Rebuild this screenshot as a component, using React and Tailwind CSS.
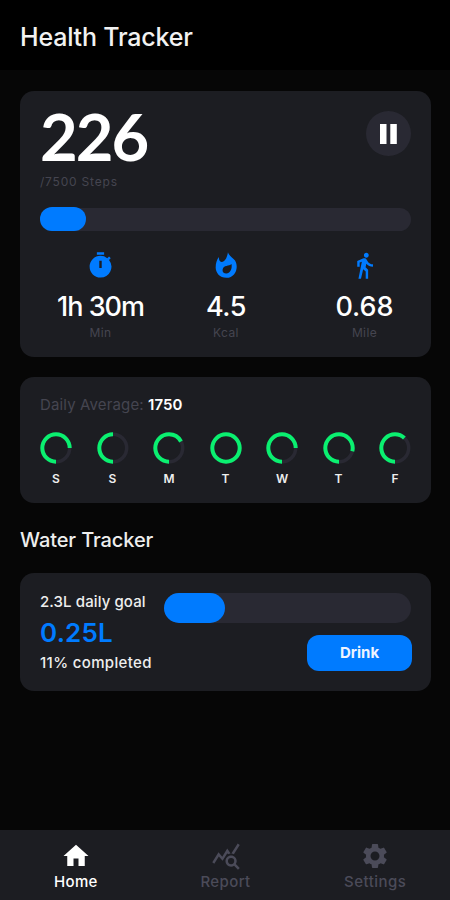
import {
  MdDirectionsWalk,
  MdHome,
  MdQueryStats,
  MdSettings,
  MdTimer,
} from "react-icons/md";

const stats = [
  { icon: MdTimer, value: "1h 30m", label: "Min", cell: "w-[121px]", tracking: "tracking-[-1px]" },
  { icon: FlameIcon, value: "4.5", label: "Kcal", cell: "w-[130px]", tracking: "tracking-[-0.5px]" },
  { icon: MdDirectionsWalk, value: "0.68", label: "Mile", cell: "w-[120px] pl-[27px]", tracking: "tracking-[0px]" },
];

const days = [
  { day: "S", percent: 75 },
  { day: "S", percent: 50 },
  { day: "M", percent: 67 },
  { day: "T", percent: 100 },
  { day: "W", percent: 75 },
  { day: "T", percent: 79 },
  { day: "F", percent: 62 },
];

const tabs = [
  { icon: MdHome, label: "Home", style: "text-white tracking-[0.3px]" },
  { icon: MdQueryStats, label: "Report", style: "text-[#4b4b59] tracking-[0.4px]" },
  { icon: MdSettings, label: "Settings", style: "text-[#4b4b59] tracking-[0.5px]" },
];

function FlameIcon({ size, color }) {
  return (
    <svg width={size} height={size} viewBox="-1 -0.5 30 30" fill={color}>
      <path
        fillRule="evenodd"
        d="M15.5 .8C17 5 20 6 22.8 9.3C27.2 16.5 23 27.2 14 27.2C7 27.2 2.8 22 2.8 16.5C2.8 12.5 4 8.8 6 5.8C6.2 8.8 6.8 10.8 9 10.8C12.5 10.8 14.7 6 15.5 .8ZM19.2 13C16.8 15.4 10.8 14 10 18.6C9.5 21.3 11.6 23 14 22.8C18 22.4 20 18 19.2 13Z"
      />
    </svg>
  );
}

function DayRing({ percent }) {
  return (
    <svg width="32" height="32" viewBox="0 0 32 32" fill="none">
      <circle cx="16" cy="16" r="13.7" stroke="#292933" strokeWidth="3.5" />
      <circle
        cx="16"
        cy="16"
        r="13.7"
        stroke="#0af070"
        strokeWidth="4"
        pathLength="100"
        strokeDasharray={`${percent} 100`}
        transform="rotate(90 16 16)"
      />
    </svg>
  );
}

function StepsCard() {
  return (
    <section className="h-[266px] rounded-[14px] bg-[#1c1d22] px-5 pt-5">
      <div className="flex h-[95px] justify-between">
        <div>
          <p className="-mt-1 font-['Lato',sans-serif] text-[65px] leading-[58px] font-bold tracking-[-2px] text-white">
            226
          </p>
          <p className="mt-[8px] text-[12px] leading-[18px] tracking-[0.8px] text-[#454550]">
            /7500 Steps
          </p>
        </div>
        <button className="flex size-[45px] items-center justify-center rounded-full bg-[#292933]">
          <svg width="17" height="20" viewBox="0 0 17 20" fill="#fff">
            <path d="M0 0h6.5v20H0zM10.3 0h6.5v20h-6.5z" />
          </svg>
        </button>
      </div>

      <div className="mt-[2px] h-[23px] rounded-full bg-[#292933]">
        <div className="relative -top-px h-6 w-[46px] rounded-full bg-[#007bff]" />
      </div>

      <div className="mt-5 flex">
        {stats.map(({ icon: Icon, value, label, cell, tracking }) => (
          <div key={label} className={`flex flex-col items-center ${cell}`}>
            <Icon size={29} color="#007bff" />
            <p className={`mt-[13px] text-[27px] leading-7 font-medium whitespace-nowrap text-white ${tracking}`}>
              {value}
            </p>
            <p className="mt-[4px] text-[12px] leading-4 tracking-[0.4px] text-[#454550]">
              {label}
            </p>
          </div>
        ))}
      </div>
    </section>
  );
}

function DailyAverage() {
  return (
    <section className="mt-5 h-[126px] rounded-[14px] bg-[#1c1d22] px-5 pt-[18px]">
      <p className="text-[15px] leading-5 tracking-[0.14px] text-[#454550]">
        Daily Average:{" "}
        <span className="font-semibold tracking-[0px] text-white">1750</span>
      </p>
      <div className="mt-[17px] flex justify-between">
        {days.map(({ day, percent }, i) => (
          <div key={i} className="flex flex-col items-center">
            <DayRing percent={percent} />
            <span className="mt-[7px] text-[12px] leading-4 font-semibold text-[#eeeeee]">
              {day}
            </span>
          </div>
        ))}
      </div>
    </section>
  );
}

function WaterCard() {
  return (
    <section className="mt-5 flex h-[118px] justify-between rounded-[14px] bg-[#1c1d22] pr-[19px] pl-5">
      <div className="pt-[19px] font-medium whitespace-nowrap text-[#eeeeee]">
        <p className="text-[15px] leading-5 tracking-[0.1px]">2.3L daily goal</p>
        <p className="mt-[7px] text-[26px] leading-7 font-semibold tracking-[0.2px] text-[#007bff]">
          0.25L
        </p>
        <p className="mt-[6px] text-[15px] leading-5 tracking-[0.35px]">11% completed</p>
      </div>
      <div className="flex w-[248px] flex-col items-end pt-5">
        <div className="mr-px h-[30px] w-[247px] rounded-full bg-[#292933]">
          <div className="h-[30px] w-[61px] rounded-full bg-[#007bff]" />
        </div>
        <button className="mt-3 h-9 w-[105px] rounded-[12px] bg-[#007bff] pt-px text-[15px] font-bold text-[#eef4ff]">
          Drink
        </button>
      </div>
    </section>
  );
}

function BottomNav() {
  return (
    <nav className="flex h-[70px] bg-[#1c1d22] pl-px">
      {tabs.map(({ icon: Icon, label, style }) => (
        <button
          key={label}
          className={`flex flex-1 flex-col items-center pt-[11px] ${style}`}
        >
          <Icon size={30} />
          <span className="mt-px text-[15px] leading-5 font-medium">{label}</span>
        </button>
      ))}
    </nav>
  );
}

export default function App() {
  return (
    <div className="flex h-[900px] w-[450px] flex-col overflow-hidden bg-[#060606] font-['Inter',sans-serif]">
      <header className="flex h-[70px] items-center bg-black px-5">
        <h1 className="pt-[6px] text-[25px] font-medium tracking-[-0.2px] text-[#f2f2f2]">
          Health Tracker
        </h1>
      </header>
      <main className="flex-1 pt-[21px] pr-[19px] pl-5">
        <StepsCard />
        <DailyAverage />
        <h2 className="mt-6 text-[20px] leading-[26px] font-medium tracking-[-0.1px] text-[#eeeeee]">
          Water Tracker
        </h2>
        <WaterCard />
      </main>
      <BottomNav />
    </div>
  );
}
